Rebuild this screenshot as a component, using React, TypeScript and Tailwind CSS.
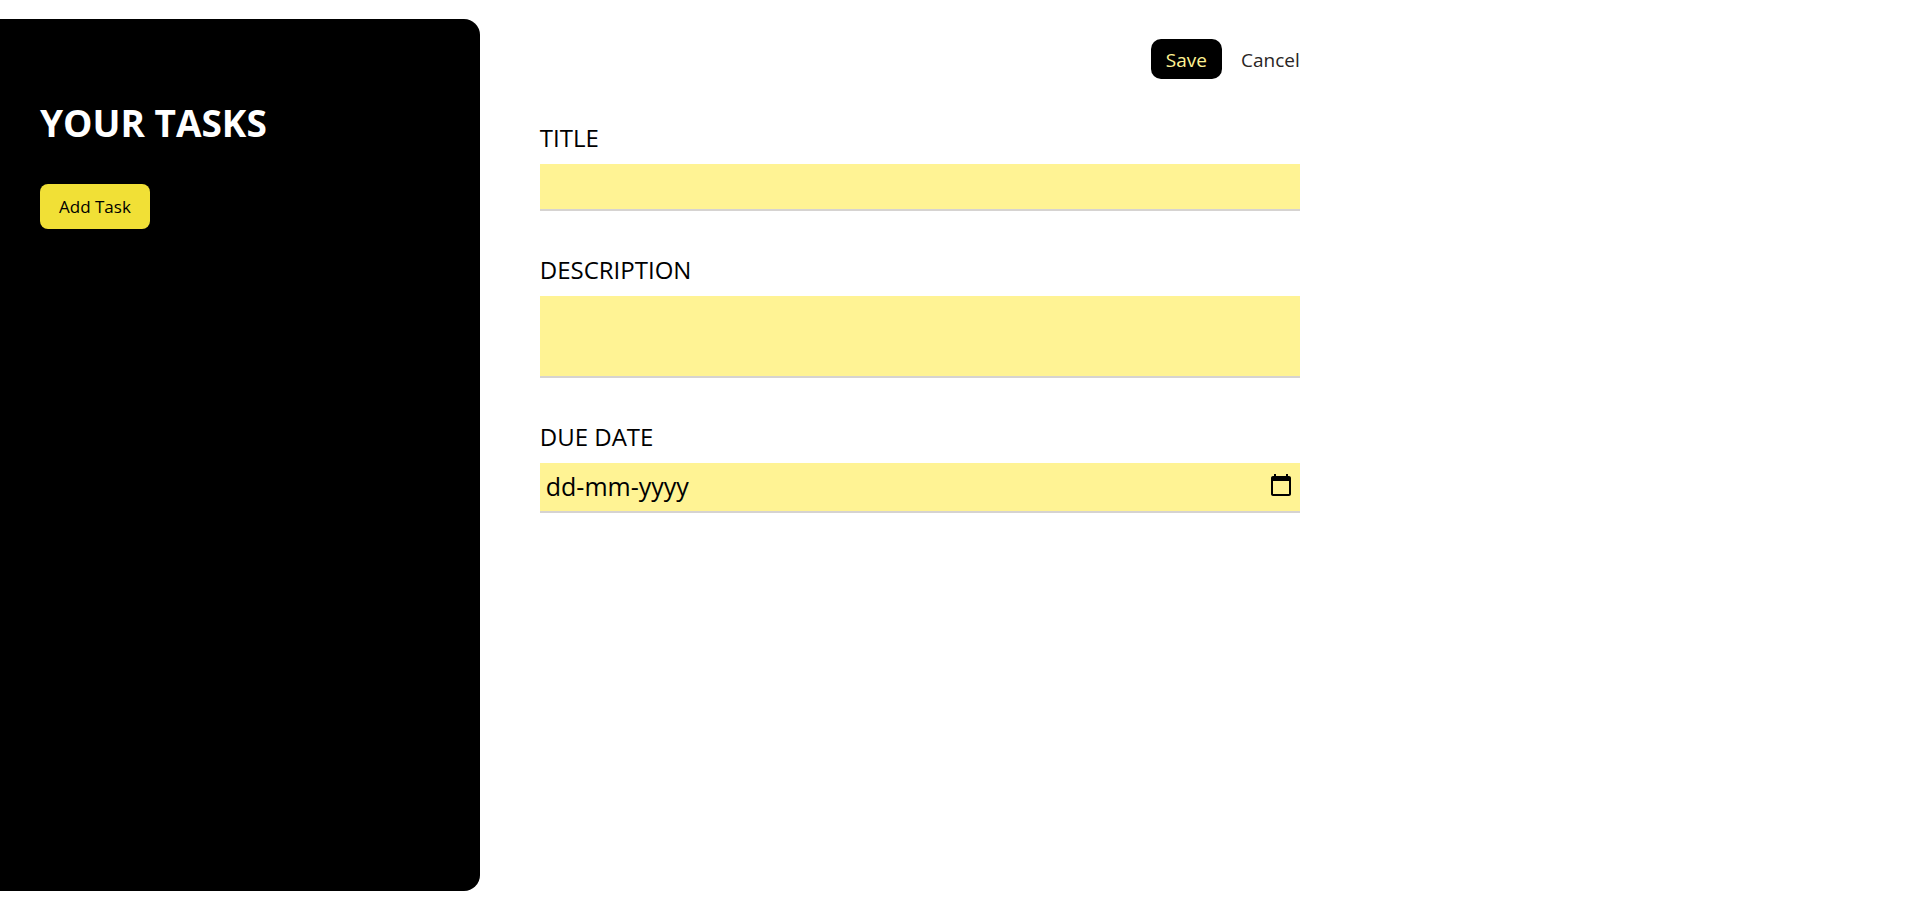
import { useState } from "react";

const fieldClass =
  "w-full rounded-none border-b-2 border-stone-300 bg-[#fff394] px-1.5 text-[25px] text-black outline-none focus:border-stone-600";
const labelClass = "text-2xl/9 text-black uppercase";

function Sidebar() {
  return (
    <aside className="w-1/4 min-w-72 shrink-0 rounded-r-2xl bg-black px-10 pt-21">
      <h2 className="text-[37px]/10 font-bold text-white uppercase">Your Tasks</h2>
      <button
        type="button"
        className="mt-[41px] rounded-lg bg-[#f1e036] px-[19px] pt-[9px] pb-2 text-[17px]/7 text-black hover:bg-yellow-300"
      >
        Add Task
      </button>
    </aside>
  );
}

function CalendarIcon() {
  return (
    <svg viewBox="0 0 24 24" className="size-6" fill="currentColor" aria-hidden="true">
      <path d="M20 3h-1V1h-2v2H7V1H5v2H4c-1.1 0-2 .9-2 2v16c0 1.1.9 2 2 2h16c1.1 0 2-.9 2-2V5c0-1.1-.9-2-2-2zm0 18H4V8h16v13z" />
    </svg>
  );
}

function NewTask() {
  const [title, setTitle] = useState("");
  const [description, setDescription] = useState("");
  const [dueDate, setDueDate] = useState("");

  return (
    <form
      className="mt-5 flex w-full max-w-[760px] flex-col gap-[41px]"
      onSubmit={(event) => event.preventDefault()}
    >
      <div className="flex items-center justify-end gap-[19px]">
        <button
          type="submit"
          className="rounded-[10px] bg-black px-[15px] pt-[5px] pb-[3px] text-[19px]/8 font-medium text-[#fff394] hover:bg-stone-900"
        >
          Save
        </button>
        <button type="button" className="pt-[5px] pb-[3px] text-[19px]/8 text-stone-800 hover:text-black">
          Cancel
        </button>
      </div>
      <div className="flex flex-col gap-2">
        <label htmlFor="title" className={labelClass}>
          Title
        </label>
        <input
          id="title"
          type="text"
          value={title}
          onChange={(event) => setTitle(event.target.value)}
          className={`${fieldClass} h-[47px]`}
        />
      </div>
      <div className="flex flex-col gap-2">
        <label htmlFor="description" className={labelClass}>
          Description
        </label>
        <textarea
          id="description"
          value={description}
          onChange={(event) => setDescription(event.target.value)}
          className={`${fieldClass} block h-[82px] resize-none`}
        />
      </div>
      <div className="flex flex-col gap-2">
        <label htmlFor="due-date" className={labelClass}>
          Due Date
        </label>
        <div className="flex h-[50px] items-center border-b-2 border-stone-300 bg-[#fff394] pr-[7px] pl-1.5">
          <input
            id="due-date"
            type="text"
            placeholder="dd-mm-yyyy"
            value={dueDate}
            onChange={(event) => setDueDate(event.target.value)}
            className="min-w-0 flex-1 bg-transparent text-[25px] text-black outline-none placeholder:text-black"
          />
          <button type="button" aria-label="Open calendar" className="pb-1 text-black">
            <CalendarIcon />
          </button>
        </div>
      </div>
    </form>
  );
}

export default function App() {
  return (
    <main className="flex min-h-screen gap-15 bg-white pt-[19px] pb-[17px] font-['Open_Sans','Noto_Sans',sans-serif]">
      <Sidebar />
      <NewTask />
    </main>
  );
}
